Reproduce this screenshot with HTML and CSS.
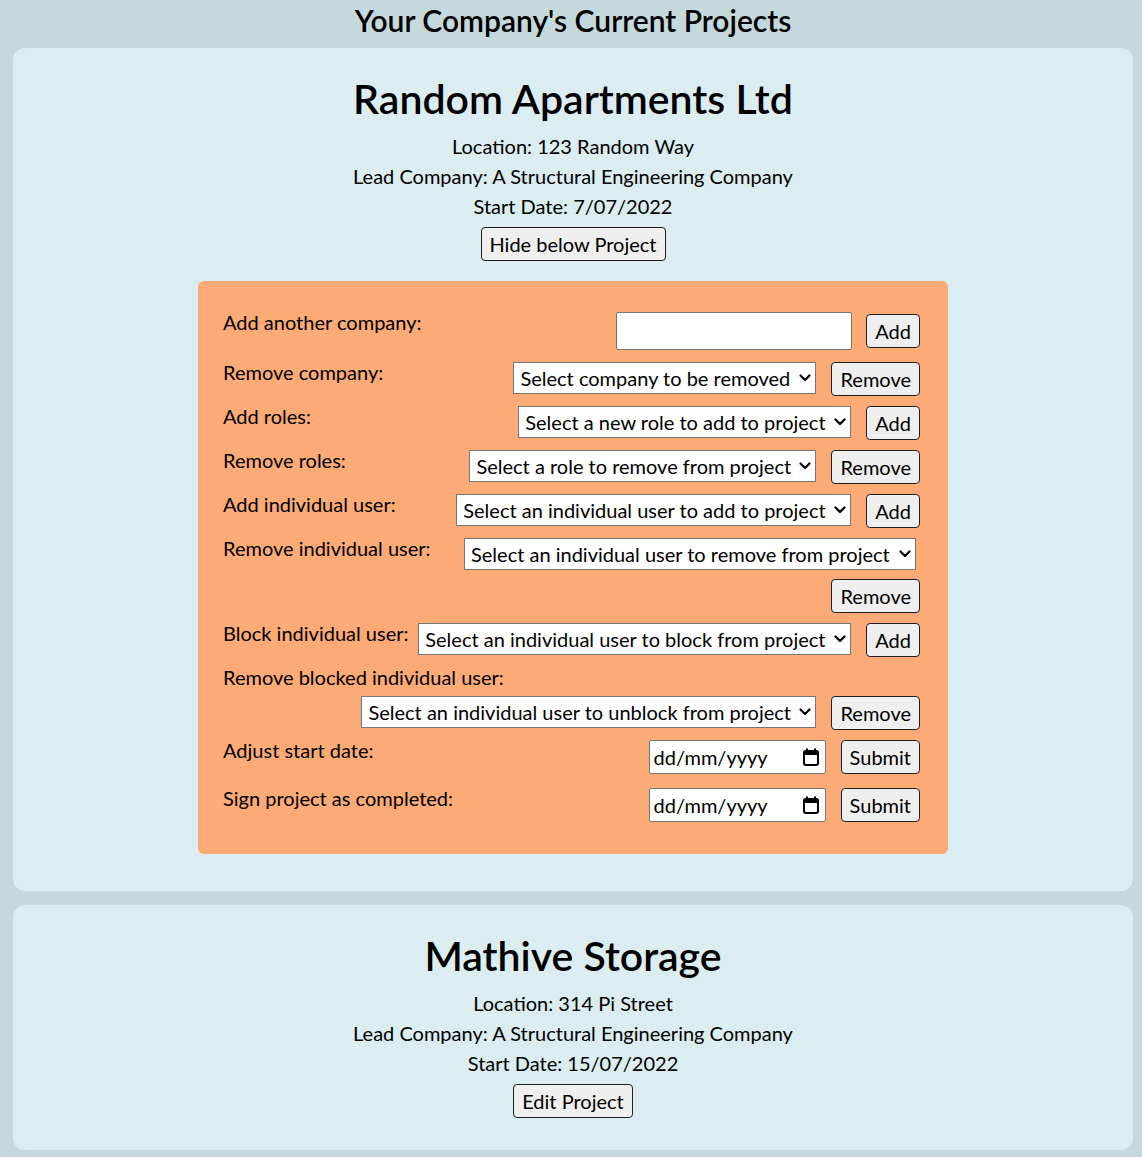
FILE: index.html
```html
<!DOCTYPE html>
<html lang="en">
<head>
<meta charset="utf-8">
<title>Your Company's Current Projects</title>
<link rel="stylesheet" href="styles.css">
</head>
<body>
<h1 class="page-title">Your Company's Current Projects</h1>

<section class="project">
  <h2 class="project-name">Random Apartments Ltd</h2>
  <p class="project-info">Location: 123 Random Way</p>
  <p class="project-info">Lead Company: A Structural Engineering Company</p>
  <p class="project-info">Start Date: 7/07/2022</p>
  <button class="btn project-toggle">Hide below Project</button>

  <div class="edit-panel">
    <div class="row row-first">
      <label class="row-label">Add another company:</label>
      <div class="controls controls-center">
        <input class="text-input" type="text">
        <button class="btn">Add</button>
      </div>
    </div>

    <div class="row">
      <label class="row-label">Remove company:</label>
      <div class="controls">
        <span class="select-wrap">
          <select class="select"><option>Select company to be removed</option></select>
          <svg class="chevron" width="12" height="8" viewBox="0 0 12 8" aria-hidden="true"><path d="M1.5 1.5 6 6l4.5-4.5" fill="none" stroke="#000" stroke-width="2.2" stroke-linecap="round" stroke-linejoin="round"/></svg>
        </span>
        <button class="btn btn-remove">Remove</button>
      </div>
    </div>

    <div class="row">
      <label class="row-label">Add roles:</label>
      <div class="controls">
        <span class="select-wrap">
          <select class="select"><option>Select a new role to add to project</option></select>
          <svg class="chevron" width="12" height="8" viewBox="0 0 12 8" aria-hidden="true"><path d="M1.5 1.5 6 6l4.5-4.5" fill="none" stroke="#000" stroke-width="2.2" stroke-linecap="round" stroke-linejoin="round"/></svg>
        </span>
        <button class="btn">Add</button>
      </div>
    </div>

    <div class="row">
      <label class="row-label">Remove roles:</label>
      <div class="controls">
        <span class="select-wrap">
          <select class="select"><option>Select a role to remove from project</option></select>
          <svg class="chevron" width="12" height="8" viewBox="0 0 12 8" aria-hidden="true"><path d="M1.5 1.5 6 6l4.5-4.5" fill="none" stroke="#000" stroke-width="2.2" stroke-linecap="round" stroke-linejoin="round"/></svg>
        </span>
        <button class="btn btn-remove">Remove</button>
      </div>
    </div>

    <div class="row">
      <label class="row-label">Add individual user:</label>
      <div class="controls">
        <span class="select-wrap">
          <select class="select"><option>Select an individual user to add to project</option></select>
          <svg class="chevron" width="12" height="8" viewBox="0 0 12 8" aria-hidden="true"><path d="M1.5 1.5 6 6l4.5-4.5" fill="none" stroke="#000" stroke-width="2.2" stroke-linecap="round" stroke-linejoin="round"/></svg>
        </span>
        <button class="btn">Add</button>
      </div>
    </div>

    <div class="row">
      <label class="row-label">Remove individual user:</label>
      <div class="controls controls-stacked">
        <span class="select-wrap select-wrapped">
          <select class="select"><option>Select an individual user to remove from project</option></select>
          <svg class="chevron" width="12" height="8" viewBox="0 0 12 8" aria-hidden="true"><path d="M1.5 1.5 6 6l4.5-4.5" fill="none" stroke="#000" stroke-width="2.2" stroke-linecap="round" stroke-linejoin="round"/></svg>
        </span>
        <button class="btn btn-remove">Remove</button>
      </div>
    </div>

    <div class="row">
      <label class="row-label">Block individual user:</label>
      <div class="controls">
        <span class="select-wrap">
          <select class="select"><option>Select an individual user to block from project</option></select>
          <svg class="chevron" width="12" height="8" viewBox="0 0 12 8" aria-hidden="true"><path d="M1.5 1.5 6 6l4.5-4.5" fill="none" stroke="#000" stroke-width="2.2" stroke-linecap="round" stroke-linejoin="round"/></svg>
        </span>
        <button class="btn">Add</button>
      </div>
    </div>

    <div class="row row-stacked">
      <label class="row-label">Remove blocked individual user:</label>
      <div class="controls controls-below">
        <span class="select-wrap">
          <select class="select"><option>Select an individual user to unblock from project</option></select>
          <svg class="chevron" width="12" height="8" viewBox="0 0 12 8" aria-hidden="true"><path d="M1.5 1.5 6 6l4.5-4.5" fill="none" stroke="#000" stroke-width="2.2" stroke-linecap="round" stroke-linejoin="round"/></svg>
        </span>
        <button class="btn btn-remove">Remove</button>
      </div>
    </div>

    <div class="row row-date">
      <label class="row-label">Adjust start date:</label>
      <div class="controls">
        <div class="date-input">
          <span class="date-text">dd/mm/yyyy</span>
          <svg class="cal-icon" width="16" height="18" viewBox="0 0 16 18" aria-hidden="true">
            <rect x="1" y="3" width="14" height="14" rx="2" fill="none" stroke="#000" stroke-width="2"/>
            <rect x="1" y="3" width="14" height="4" fill="#000"/>
            <rect x="3" y="0.5" width="2" height="3" fill="#000"/>
            <rect x="11" y="0.5" width="2" height="3" fill="#000"/>
          </svg>
        </div>
        <button class="btn">Submit</button>
      </div>
    </div>

    <div class="row row-last">
      <label class="row-label">Sign project as completed:</label>
      <div class="controls">
        <div class="date-input">
          <span class="date-text">dd/mm/yyyy</span>
          <svg class="cal-icon" width="16" height="18" viewBox="0 0 16 18" aria-hidden="true">
            <rect x="1" y="3" width="14" height="14" rx="2" fill="none" stroke="#000" stroke-width="2"/>
            <rect x="1" y="3" width="14" height="4" fill="#000"/>
            <rect x="3" y="0.5" width="2" height="3" fill="#000"/>
            <rect x="11" y="0.5" width="2" height="3" fill="#000"/>
          </svg>
        </div>
        <button class="btn">Submit</button>
      </div>
    </div>
  </div>
</section>

<section class="project">
  <h2 class="project-name">Mathive Storage</h2>
  <p class="project-info">Location: 314 Pi Street</p>
  <p class="project-info">Lead Company: A Structural Engineering Company</p>
  <p class="project-info">Start Date: 15/07/2022</p>
  <button class="btn project-toggle">Edit Project</button>
</section>
</body>
</html>
```

FILE: styles.css
```css
* {
  box-sizing: border-box;
}

html, body {
  background: #c5d8dc;
}

body {
  margin: 0;
  padding: 0 9px 8px 13px;
  font-family: Lato, "Liberation Sans", sans-serif;
  color: #000;
}

.page-title {
  margin: 0;
  font-size: 30px;
  line-height: 40px;
  font-weight: 600;
  text-align: center;
}

.project {
  margin-top: 8px;
  margin-bottom: 14px;
  background: #dbedf1;
  border-radius: 12px;
  padding: 24px 20px 32px;
  text-align: center;
}

.project:last-child {
  margin-bottom: 0;
}

.project-name {
  margin: 0 0 6px;
  font-size: 41px;
  line-height: 53px;
  font-weight: 600;
}

.project-info {
  margin: 0;
  font-size: 20px;
  line-height: 30px;
}

.btn {
  font-family: inherit;
  font-size: 20px;
  line-height: 26px;
  height: 34px;
  padding: 0 8px;
  color: #000;
  background: #efefef;
  border: 1px solid #1f1f1f;
  border-radius: 4px;
}

.project-toggle {
  margin-top: 6px;
}

.edit-panel {
  width: 750px;
  margin: 20px auto 5px;
  padding: 28px 28px 32px 25px;
  background: #fcab76;
  border-radius: 6px;
  text-align: left;
}

.row {
  display: flex;
  justify-content: space-between;
  align-items: flex-start;
  margin-bottom: 7px;
}

.row-first {
  margin-bottom: 9px;
}

.row-date {
  margin-bottom: 11px;
}

.row-last {
  margin-bottom: 0;
}

.row-stacked {
  flex-direction: column;
  align-items: stretch;
}

.row-label {
  font-size: 20px;
  line-height: 27px;
  white-space: nowrap;
  margin-right: 8px;
}

.controls {
  display: flex;
  align-items: flex-start;
  justify-content: flex-end;
  gap: 15px;
  margin-top: 3px;
}

.controls-center {
  align-items: center;
  gap: 14px;
}

.controls-stacked {
  flex-direction: column;
  align-items: flex-end;
  gap: 9px;
}

.controls-below {
  margin-top: 5px;
}

.select-wrap {
  position: relative;
  display: inline-flex;
}

.select-wrapped {
  margin-right: 4px;
}

.select {
  -webkit-appearance: none;
  appearance: none;
  font-family: inherit;
  font-size: 20px;
  height: 32px;
  color: #000;
  background: #fff;
  border: 1px solid #767676;
  border-radius: 0;
  padding: 0 24px 0 6px;
}

.chevron {
  position: absolute;
  right: 5px;
  top: 12px;
  pointer-events: none;
}

.text-input {
  width: 236px;
  height: 38px;
  font-family: inherit;
  font-size: 20px;
  background: #fff;
  border: 1px solid #767676;
  border-radius: 2px;
}

.date-input {
  display: flex;
  align-items: center;
  justify-content: space-between;
  width: 177px;
  height: 34px;
  padding: 0 6px 0 4px;
  background: #fff;
  border: 1px solid #767676;
  border-radius: 2px;
}

.date-text {
  font-size: 20px;
  line-height: 26px;
}

.cal-icon {
  display: block;
  flex: none;
}
```
